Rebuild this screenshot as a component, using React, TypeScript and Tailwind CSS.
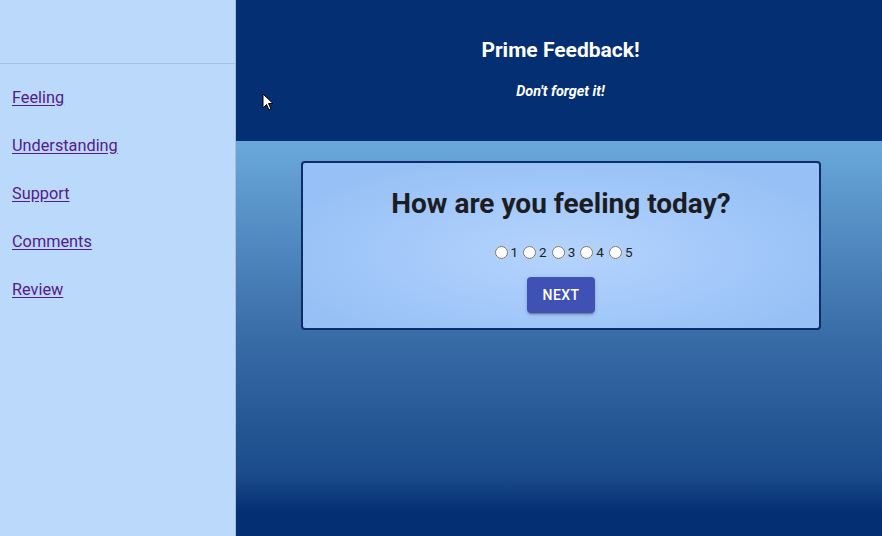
import React from 'react';

const links = ['Feeling', 'Understanding', 'Support', 'Comments', 'Review'];

const Sidebar = () => (
    <div className="w-[236px] shrink-0 bg-[#bbd9fb] border-r border-[#a3bfdf] flex flex-col">
        <div className="h-16 border-b border-[#a6c2e2]" />
        <ul className="pt-[10px]">
            {links.map((l) => (
                <li key={l} className="h-12 flex items-center px-3">
                    <a href="#" className="text-[16.3px] text-[#551a8b] underline underline-offset-2">
                        {l}
                    </a>
                </li>
            ))}
        </ul>
    </div>
);

const App = () => {
    return (
        <div className="h-[536px] w-[882px] flex overflow-hidden font-['Roboto',sans-serif]">
            <Sidebar />
            <div className="flex-1 flex flex-col relative">
                <header className="h-[141px] shrink-0 bg-[#042f73] text-white flex flex-col items-center pt-[36px]">
                    <h1 className="text-[21px] font-bold leading-[28px] ml-[3px]">Prime Feedback!</h1>
                    <p className="mt-[18px] text-[14.4px] font-bold italic leading-5 ml-[3px]">Don't forget it!</p>
                </header>
                <main className="flex-1 bg-[linear-gradient(180deg,#6aa8da_0%,#3a6ea8_48%,#1a4a8a_85%,#042f73_94%)] pt-5 flex justify-center">
                    <div className="ml-[4px] w-[520px] h-[169px] rounded-[4px] border-2 border-[#0b2e68] bg-[radial-gradient(ellipse_at_50%_55%,#b5d4fc_0%,#a6cafa_40%,#97c1f6_80%)] flex flex-col items-center pt-[22px]">
                        <h2 className="text-[28px] font-bold text-[#1c1d22] leading-[38px]">How are you feeling today?</h2>
                        <div className="mt-[19px] flex items-center text-[13.5px] text-[#222]">
                            {[1, 2, 3, 4, 5].map((n) => (
                                <label key={n} className="flex items-center">
                                    <input type="radio" name="feeling" className="m-0 ml-[5px] mr-[3px] w-[13px] h-[13px]" />
                                    {n}
                                </label>
                            ))}
                        </div>
                        <button className="mt-[15px] h-9 w-[68px] rounded-[4px] bg-[#3f51b5] text-white text-[14px] font-medium tracking-[0.4px] shadow-[0_3px_1px_-2px_rgba(0,0,0,0.2),0_2px_2px_0_rgba(0,0,0,0.14),0_1px_5px_0_rgba(0,0,0,0.12)]">
                            NEXT
                        </button>
                    </div>
                </main>
                <svg className="absolute left-[26px] top-[93px]" width="12" height="19" viewBox="0 0 12 19">
                    <path d="M1 1 L1 15 L4.5 11.5 L7 17 L9 16 L6.5 10.5 L11 10.5 Z" fill="#fff" stroke="#000" strokeWidth="1" />
                </svg>
            </div>
        </div>
    );
};

export default App;
